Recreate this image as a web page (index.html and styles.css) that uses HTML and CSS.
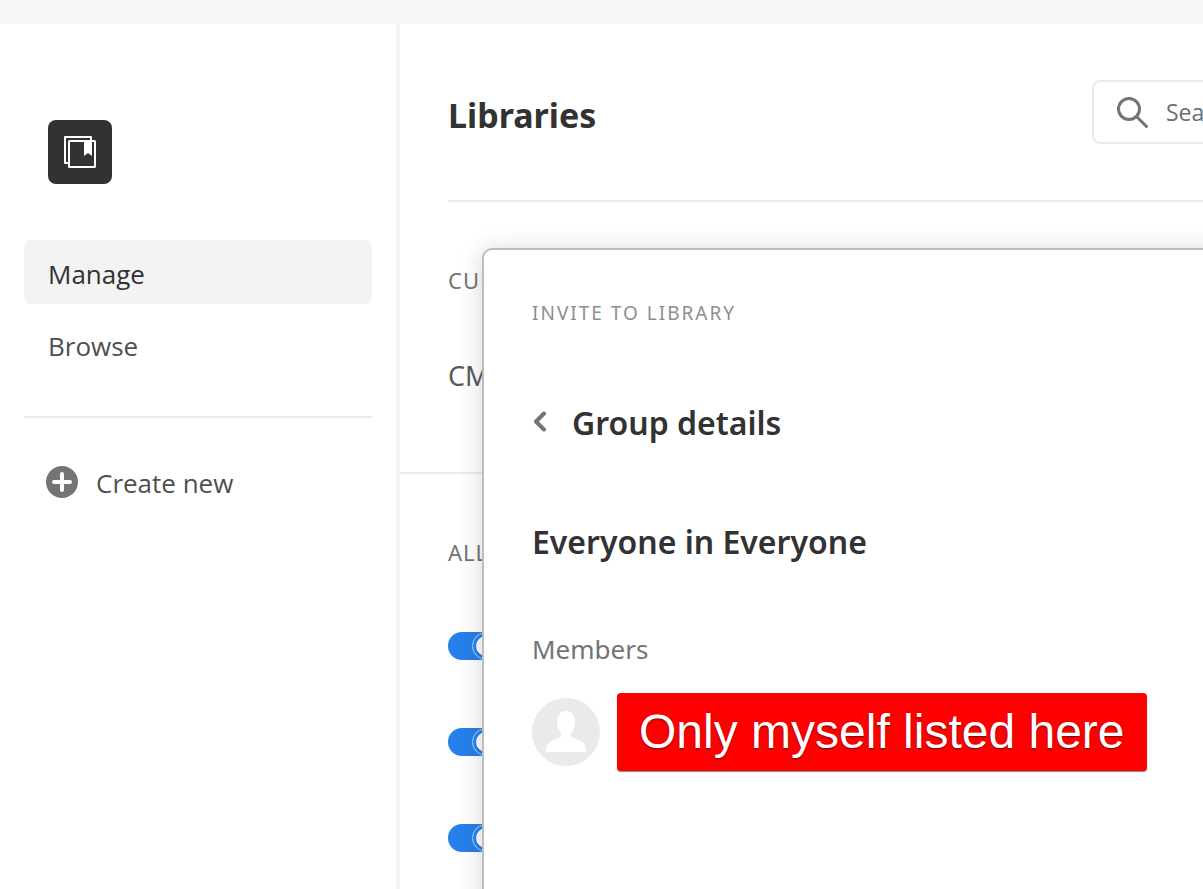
FILE: index.html
```html
<!DOCTYPE html>
<html lang="en">
<head>
<meta charset="utf-8">
<title>Libraries</title>
<link rel="stylesheet" href="styles.css">
</head>
<body>
<div class="app">
  <aside class="sidebar">
    <svg class="logo" viewBox="0 0 64 64" aria-hidden="true">
      <rect width="64" height="64" rx="8" fill="#323232"/>
      <path d="M20 43H17V17H43V20" fill="none" stroke="#fff" stroke-width="2" stroke-linejoin="round"/>
      <rect x="21" y="21" width="26" height="26" rx=".5" fill="none" stroke="#fff" stroke-width="2"/>
      <path d="M36 21h8v15l-4-3-4 3z" fill="#fff"/>
    </svg>
    <nav class="nav">
      <a class="nav-item nav-item-active" href="#manage" aria-current="page">Manage</a>
      <a class="nav-item" href="#browse">Browse</a>
    </nav>
    <hr class="rule">
    <button class="create" type="button">
      <svg class="create-icon" viewBox="0 0 32 32" aria-hidden="true">
        <circle cx="16" cy="16" r="16" fill="#747474"/>
        <path d="M16 8v16M8 16h16" stroke="#fff" stroke-width="4" stroke-linecap="round"/>
      </svg>
      Create new
    </button>
  </aside>
  <main class="main">
    <div class="content">
      <header class="header">
        <h1 class="title">Libraries</h1>
        <label class="search">
          <svg class="search-icon" viewBox="0 0 32 32" aria-hidden="true">
            <circle cx="13" cy="13" r="10.5" fill="none" stroke="#747474" stroke-width="3"/>
            <path d="M21 21l9.500 9.500" stroke="#747474" stroke-width="3" stroke-linecap="round"/>
          </svg>
          <input class="search-input" type="text" placeholder="Search" aria-label="Search">
        </label>
      </header>
      <section class="current">
        <h2 class="section-label">CURRENT</h2>
        <p class="library-name">CM</p>
      </section>
      <section class="all">
        <h2 class="section-label">ALL</h2>
        <div class="switches">
          <input class="switch" type="checkbox" checked aria-label="Library 1">
          <input class="switch" type="checkbox" checked aria-label="Library 2">
          <input class="switch" type="checkbox" checked aria-label="Library 3">
        </div>
      </section>
    </div>
    <div class="dialog" role="dialog" aria-labelledby="dialog-label">
      <p class="dialog-label" id="dialog-label">INVITE TO LIBRARY</p>
      <div class="dialog-header">
        <button class="back" type="button" aria-label="Back">
          <svg class="back-icon" viewBox="0 0 16 24" aria-hidden="true">
            <path d="M12 2.500L4 10.500l8 8" fill="none" stroke="#747474" stroke-width="4" stroke-linecap="round" stroke-linejoin="round"/>
          </svg>
        </button>
        <h2 class="dialog-title">Group details</h2>
      </div>
      <h3 class="group-name">Everyone in Everyone</h3>
      <p class="members-label">Members</p>
      <div class="member">
        <svg class="avatar" viewBox="0 0 68 68" aria-hidden="true">
          <circle cx="34" cy="34" r="34" fill="#eaeaea"/>
          <path d="M34 13c-6 0-9 4.500-9 11 0 5 2 8.500 4 11 1 1.300.8 3.500-1.500 4.500C21 42 14 43.500 14 52v2h40v-2c0-8.500-7-10-13.500-12.500-2.300-1-2.500-3.200-1.500-4.500 2-2.500 4-6 4-11 0-6.500-3-11-9-11z" fill="#fff"/>
        </svg>
        <span class="note">Only myself listed here</span>
      </div>
    </div>
  </main>
</div>
</body>
</html>
```
FILE: styles.css
```css
*,
*::before {
  box-sizing: border-box;
}

body {
  margin: 0;
  background: #fff;
  color: #323232;
  font-family: "Noto Sans", sans-serif;
  overflow: hidden;
}

h1, h2, h3, p {
  margin: 0;
}

.app {
  display: flex;
  min-height: 100vh;
  border-top: 24px solid #f7f7f7;
}

.sidebar {
  flex: 0 0 400px;
  padding: 96px 24px 0;
  border-right: 4px solid #f4f4f4;
}

.logo {
  display: block;
  width: 64px;
  height: 64px;
  margin: 0 24px 56px;
}

.nav {
  display: flex;
  flex-direction: column;
  gap: 8px;
}

.nav-item {
  padding: 4px 24px 0;
  border-radius: 8px;
  color: #4f4f4f;
  font-family: "Open Sans", sans-serif;
  font-size: 26px;
  line-height: 60px;
  text-decoration: none;
}

.nav-item-active {
  background: #f3f3f3;
  color: #323232;
}

.rule {
  height: 2px;
  margin: 40px 0 48px;
  border: 0;
  background: #eaeaea;
}

.create {
  display: flex;
  align-items: flex-start;
  gap: 18px;
  padding: 0 22px;
  border: 0;
  background: none;
  color: #4f4f4f;
  font-family: "Open Sans", sans-serif;
  font-size: 26px;
  line-height: 34px;
}

.create-icon {
  width: 32px;
  height: 32px;
}

.main {
  position: relative;
  flex: 1;
  min-width: 0;
  overflow: hidden;
}

.content {
  min-width: 1100px;
}

.header {
  display: flex;
  align-items: flex-start;
  justify-content: space-between;
  height: 178px;
  margin-left: 48px;
  padding-top: 56px;
  border-bottom: 2px solid #eaeaea;
}

.title {
  font-size: 34px;
  font-weight: 700;
  line-height: 70px;
}

.search {
  display: flex;
  align-items: center;
  gap: 18px;
  width: 408px;
  height: 64px;
  padding: 0 22px;
  border: 2px solid #eaeaea;
  border-radius: 8px;
}

.search-icon {
  flex: none;
  width: 32px;
  height: 32px;
}

.search-input {
  width: 100%;
  padding: 0;
  border: 0;
  outline: 0;
  font-family: "Open Sans", sans-serif;
  font-size: 23px;
}

.search-input::placeholder {
  color: #6e6e6e;
}

.current {
  height: 272px;
  padding: 62px 48px 0;
  border-bottom: 2px solid #eaeaea;
}

.all {
  padding: 62px 48px 0;
}

.section-label {
  color: #747474;
  font-size: 22px;
  font-weight: 400;
  line-height: 32px;
  letter-spacing: 1px;
}

.library-name {
  margin-top: 64px;
  color: #5a5a5a;
  font-size: 27px;
  line-height: 32px;
}

.switches {
  display: flex;
  flex-direction: column;
  gap: 68px;
  margin-top: 64px;
}

.switch {
  display: flex;
  justify-content: flex-end;
  appearance: none;
  width: 52px;
  height: 28px;
  margin: 0;
  border-radius: 14px;
  background: #2680eb;
}

.switch::before {
  content: "";
  width: 28px;
  height: 28px;
  border: 1px solid #8fbdf4;
  border-radius: 50%;
  background: #fff;
  box-shadow: inset 0 0 0 3px #2680eb;
}

.dialog {
  position: absolute;
  top: 224px;
  right: -320px;
  bottom: -80px;
  left: 82px;
  padding: 47px 48px 0;
  border: 2px solid #bdbdbd;
  border-radius: 10px;
  background: #fff;
  box-shadow: 0 2px 24px rgba(0, 0, 0, 0.16);
}

.dialog-label {
  color: #8e8e8e;
  font-size: 19px;
  line-height: 32px;
  letter-spacing: 2px;
}

.dialog-header {
  display: flex;
  align-items: center;
  gap: 24px;
  margin-top: 70px;
}

.back {
  padding: 0;
  border: 0;
  background: none;
}

.back-icon {
  display: block;
  width: 16px;
  height: 24px;
}

.dialog-title,
.group-name {
  font-size: 32px;
  font-weight: 600;
  line-height: 48px;
}

.group-name {
  margin-top: 71px;
}

.members-label {
  margin-top: 67px;
  color: #747474;
  font-size: 26px;
  line-height: 32px;
}

.member {
  display: flex;
  align-items: center;
  gap: 17px;
  margin-top: 28px;
}

.avatar {
  width: 68px;
  height: 68px;
}

.note {
  padding: 0 22px;
  border-radius: 4px;
  background: #f00;
  box-shadow: 0 1px 1px rgba(0, 0, 0, 0.5);
  color: #fff;
  font-family: "Liberation Sans", sans-serif;
  font-size: 48px;
  line-height: 78px;
  text-shadow: 0 1px 2px rgba(0, 0, 0, 0.5);
}
```
